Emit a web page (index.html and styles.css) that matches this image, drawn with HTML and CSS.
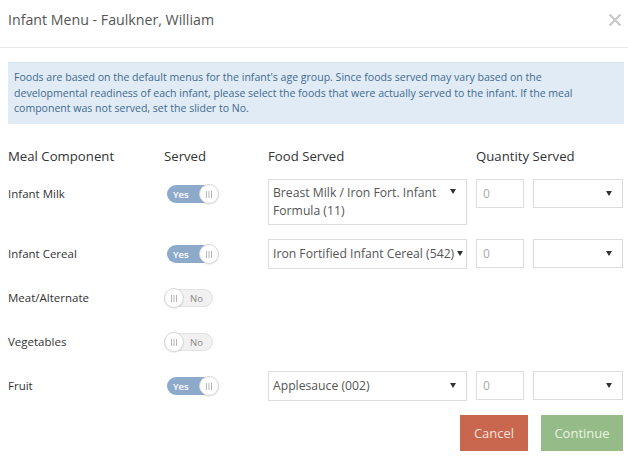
FILE: index.html
```html
<!DOCTYPE html>
<html>
<head>
<meta charset="utf-8">
<link rel="stylesheet" href="styles.css">
</head>
<body>
<div class="modal">
  <div class="modal-header">
    <h1 class="modal-title">Infant Menu - Faulkner, William</h1>
    <button class="close" aria-label="Close">
      <svg width="14" height="14" viewBox="0 0 14 14"><path d="M1.5 1.5 L12.5 12.5 M12.5 1.5 L1.5 12.5" stroke="#c9c9c9" stroke-width="2.2" fill="none"/></svg>
    </button>
  </div>
  <div class="modal-body">
    <div class="alert">Foods are based on the default menus for the infant's age group. Since foods served may vary based on the developmental readiness of each infant, please select the foods that were actually served to the infant. If the meal component was not served, set the slider to No.</div>

    <div class="menu-grid">
      <div class="th">Meal Component</div>
      <div class="th">Served</div>
      <div class="th">Food Served</div>
      <div class="th th-qty">Quantity Served</div>

      <div class="cell label">Infant Milk</div>
      <div class="cell"><span class="toggle on"><span class="toggle-text">Yes</span><span class="knob"><svg width="8" height="7" viewBox="0 0 8 7"><path d="M1.5 0V7M4 0V7M6.5 0V7" stroke="#b5b5b5" stroke-width="1"/></svg></span></span></div>
      <div class="cell"><div class="select tall">Breast Milk / Iron Fort. Infant Formula (11)<span class="caret"></span></div></div>
      <div class="cell"><div class="qty">0</div></div>
      <div class="cell"><div class="select unit"><span class="caret"></span></div></div>

      <div class="cell label">Infant Cereal</div>
      <div class="cell"><span class="toggle on"><span class="toggle-text">Yes</span><span class="knob"><svg width="8" height="7" viewBox="0 0 8 7"><path d="M1.5 0V7M4 0V7M6.5 0V7" stroke="#b5b5b5" stroke-width="1"/></svg></span></span></div>
      <div class="cell"><div class="select nowrap">Iron Fortified Infant Cereal (542)<span class="caret"></span></div></div>
      <div class="cell"><div class="qty">0</div></div>
      <div class="cell"><div class="select unit"><span class="caret"></span></div></div>

      <div class="cell label">Meat/Alternate</div>
      <div class="cell"><span class="toggle off"><span class="knob"><svg width="8" height="7" viewBox="0 0 8 7"><path d="M1.5 0V7M4 0V7M6.5 0V7" stroke="#b5b5b5" stroke-width="1"/></svg></span><span class="toggle-text">No</span></span></div>
      <div class="cell span3"></div>

      <div class="cell label">Vegetables</div>
      <div class="cell"><span class="toggle off"><span class="knob"><svg width="8" height="7" viewBox="0 0 8 7"><path d="M1.5 0V7M4 0V7M6.5 0V7" stroke="#b5b5b5" stroke-width="1"/></svg></span><span class="toggle-text">No</span></span></div>
      <div class="cell span3"></div>

      <div class="cell label">Fruit</div>
      <div class="cell"><span class="toggle on"><span class="toggle-text">Yes</span><span class="knob"><svg width="8" height="7" viewBox="0 0 8 7"><path d="M1.5 0V7M4 0V7M6.5 0V7" stroke="#b5b5b5" stroke-width="1"/></svg></span></span></div>
      <div class="cell"><div class="select">Applesauce (002)<span class="caret"></span></div></div>
      <div class="cell"><div class="qty">0</div></div>
      <div class="cell"><div class="select unit"><span class="caret"></span></div></div>
    </div>
  </div>
  <div class="modal-footer">
    <button class="btn btn-cancel">Cancel</button>
    <button class="btn btn-continue">Continue</button>
  </div>
</div>
</body>
</html>
```

FILE: styles.css
```css
* { box-sizing: border-box; }
html, body {
  margin: 0;
  padding: 0;
  background: #fff;
}
body {
  font-family: "Open Sans", "DejaVu Sans", sans-serif;
  color: #333;
}
.modal {
  width: 628px;
  height: 459px;
  padding: 0 4px 0 8px;
}
.modal-header {
  display: flex;
  align-items: center;
  justify-content: space-between;
  height: 48px;
  border-bottom: 1px solid #e8e8e8;
  margin: 0 -4px 0 -8px;
  padding: 0 6px 8px 8px;
}
.modal-title {
  margin: 0;
  font-size: 14.2px;
  font-weight: 400;
  color: #555;
  line-height: 22px;
}
.close {
  border: 0;
  background: none;
  padding: 0;
  margin: 0;
  width: 14px;
  height: 14px;
  display: flex;
}
.modal-body {
  padding-top: 14px;
}
.alert {
  background: #e0ebf5;
  border-top: 1px solid #d6e3ef;
  color: #3f6a90;
  font-size: 10.55px;
  line-height: 15.5px;
  padding: 7px 20px 8px 6px;
  height: 62px;
}
.menu-grid {
  display: grid;
  grid-template-columns: 156px 104px 208px 57px 90px;
  grid-auto-rows: auto;
  row-gap: 14px;
  margin-top: 22px;
}
.th {
  font-size: 13.2px;
  line-height: 20px;
  color: #333;
  margin-bottom: -1px;
}
.th-qty {
  grid-column: span 2;
}
.cell {
  min-height: 30px;
  display: flex;
  align-items: flex-start;
}
.span3 { grid-column: span 3; }
.label {
  font-size: 11.5px;
  line-height: 30px;
  color: #333;
}
.toggle {
  margin-top: 6px;
  display: inline-flex;
  align-items: center;
  height: 18px;
  border-radius: 9px;
  font-size: 9.5px;
  position: relative;
}
.toggle.on {
  width: 51px;
  margin-left: 3px;
  background: #8eaacb;
  color: #fff;
  font-weight: 600;
  padding-left: 6px;
}
.toggle.off {
  width: 49px;
  background: #f1f1f1;
  border: 1px solid #e2e2e2;
  color: #8a8a8a;
}
.toggle .toggle-text { flex: 1; }
.toggle.off .toggle-text { padding-left: 6px; }
.knob {
  width: 20px;
  height: 20px;
  border-radius: 50%;
  background: #fff;
  border: 1px solid #d7d7d7;
  box-shadow: 0 1px 1px rgba(0,0,0,0.08);
  display: flex;
  align-items: center;
  justify-content: center;
  flex: none;
}
.toggle.off .knob { margin-left: -1px; }
.toggle.on .knob { margin-right: -1px; }
.select {
  position: relative;
  width: 199px;
  height: 30px;
  border: 1px solid #dcdcdc;
  background: #fff;
  font-size: 12.2px;
  line-height: 18px;
  color: #555;
  padding: 5px 24px 5px 4px;
}
.select.tall {
  height: 46px;
  padding-top: 4px;
}
.select.nowrap {
  white-space: nowrap;
  padding-right: 0;
}
.select.unit {
  width: 90px;
  height: 29px;
}
.caret {
  position: absolute;
  right: 10px;
  top: 11px;
  width: 0;
  height: 0;
  border-left: 3px solid transparent;
  border-right: 3px solid transparent;
  border-top: 5px solid #333;
}
.select.tall .caret { top: 9px; }
.select.nowrap .caret { right: 3px; }
.qty {
  width: 48px;
  height: 29px;
  border: 1px solid #dcdcdc;
  font-size: 12px;
  line-height: 18px;
  color: #aaa;
  padding: 5px 6px;
}
.modal-footer {
  display: flex;
  justify-content: flex-end;
  gap: 13px;
  margin-top: 14px;
  padding-right: 1px;
}
.btn {
  border: 0;
  height: 36px;
  font-family: "Open Sans", "DejaVu Sans", sans-serif;
  font-size: 13px;
  padding: 0;
}
.btn-cancel {
  width: 68px;
  background: #c8674e;
  color: #f4e2dc;
}
.btn-continue {
  width: 82px;
  background: #95bb88;
  color: #e9f5e2;
}
```
